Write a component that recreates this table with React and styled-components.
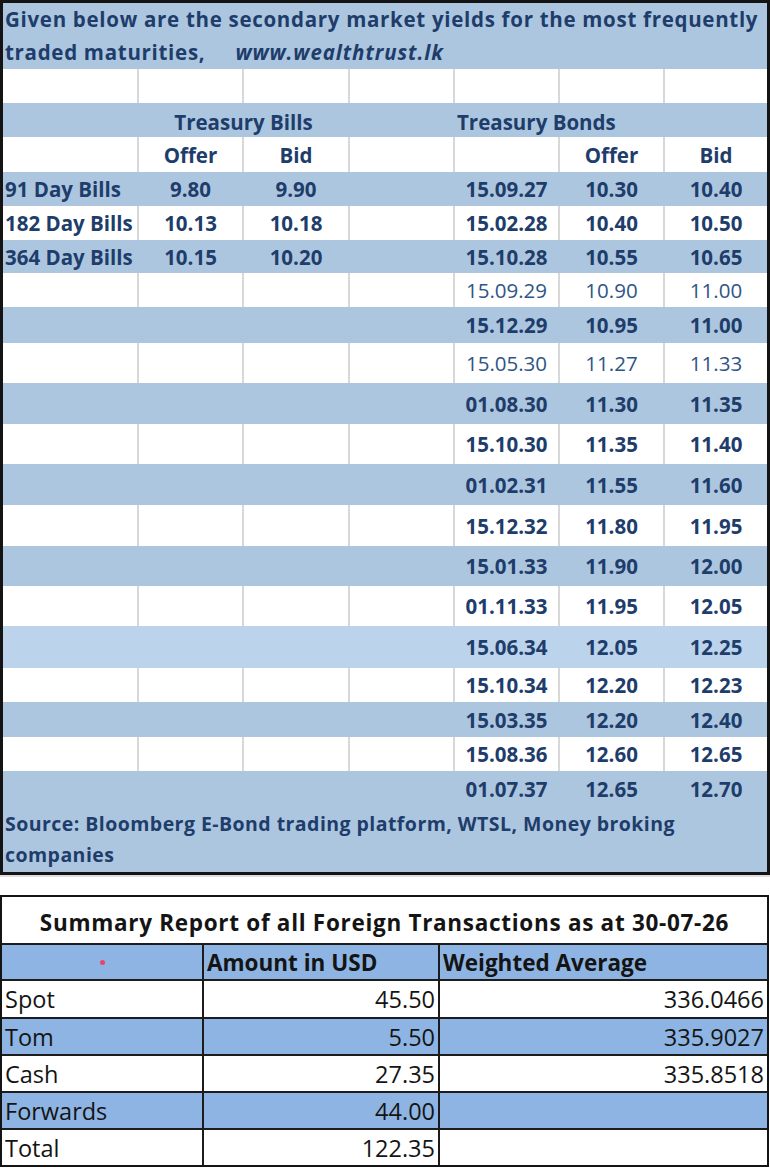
import React from "react";
import styled, { createGlobalStyle } from "styled-components";

const GlobalStyle = createGlobalStyle`
  body {
    margin: 0;
    background: #ffffff;
    font-family: "Open Sans", "Liberation Sans", sans-serif;
  }
  * { box-sizing: border-box; }
`;

const BLUE = "#adc6df";
const LIGHT_BLUE = "#bcd3ec";
const INK = "#1e3d6b";
const SOFT_INK = "#2f5587";

const bills = [
  { label: "91 Day Bills", offer: "9.80", bid: "9.90" },
  { label: "182 Day Bills", offer: "10.13", bid: "10.18" },
  { label: "364 Day Bills", offer: "10.15", bid: "10.20" },
];

// maturity, offer, bid, row height, tone, bold
const bonds = [
  ["15.09.27", "10.30", "10.40", 34, "blue", true],
  ["15.02.28", "10.40", "10.50", 34, "white", true],
  ["15.10.28", "10.55", "10.65", 33, "blue", true],
  ["15.09.29", "10.90", "11.00", 34, "white", false],
  ["15.12.29", "10.95", "11.00", 36, "blue", true],
  ["15.05.30", "11.27", "11.33", 40, "white", false],
  ["01.08.30", "11.30", "11.35", 41, "blue", true],
  ["15.10.30", "11.35", "11.40", 40, "white", true],
  ["01.02.31", "11.55", "11.60", 41, "blue", true],
  ["15.12.32", "11.80", "11.95", 41, "white", true],
  ["15.01.33", "11.90", "12.00", 40, "blue", true],
  ["01.11.33", "11.95", "12.05", 40, "white", true],
  ["15.06.34", "12.05", "12.25", 42, "light", true],
  ["15.10.34", "12.20", "12.23", 34, "white", true],
  ["15.03.35", "12.20", "12.40", 35, "blue", true],
  ["15.08.36", "12.60", "12.65", 34, "white", true],
  ["01.07.37", "12.65", "12.70", 35, "blue", true],
];

const fx = [
  { name: "Spot", amount: "45.50", avg: "336.0466", h: 38 },
  { name: "Tom", amount: "5.50", avg: "335.9027", h: 37, blue: true },
  { name: "Cash", amount: "27.35", avg: "335.8518", h: 37 },
  { name: "Forwards", amount: "44.00", avg: "", h: 37, blue: true },
  { name: "Total", amount: "122.35", avg: "", h: 37 },
];

const toneColor = (tone) =>
  tone === "blue" ? BLUE : tone === "light" ? LIGHT_BLUE : "#ffffff";

export default function App() {
  return (
    <Page>
      <GlobalStyle />
      <YieldPanel>
        <Intro>
          Given below are the secondary market yields for the most frequently
          <br />
          traded maturities,&nbsp;&nbsp;&nbsp;&nbsp; <Site>www.wealthtrust.lk</Site>
        </Intro>

        <Row $h={34} $tone="white">
          {[0, 1, 2, 3, 4, 5, 6].map((i) => (
            <Cell key={i} $grid />
          ))}
        </Row>

        <Row $h={34} $tone="blue" $bold>
          <Cell />
          <Cell $span={2} $lift>Treasury Bills</Cell>
          <Cell />
          <Cell $span={3} $align="left" $lift>Treasury Bonds</Cell>
        </Row>

        <Row $h={35} $tone="white" $bold>
          <Cell $grid />
          <Cell $grid>Offer</Cell>
          <Cell $grid>Bid</Cell>
          <Cell $grid />
          <Cell $grid />
          <Cell $grid>Offer</Cell>
          <Cell $grid>Bid</Cell>
        </Row>

        {bonds.map(([date, offer, bid, h, tone, bold], i) => {
          const bill = bills[i];
          const grid = tone === "white";
          return (
            <Row key={date} $h={h} $tone={tone} $bold={bold}>
              <Cell $grid={grid} $align="left">{bill ? bill.label : ""}</Cell>
              <Cell $grid={grid}>{bill ? bill.offer : ""}</Cell>
              <Cell $grid={grid}>{bill ? bill.bid : ""}</Cell>
              <Cell $grid={grid} />
              <Cell $grid={grid}>{date}</Cell>
              <Cell $grid={grid}>{offer}</Cell>
              <Cell $grid={grid}>{bid}</Cell>
            </Row>
          );
        })}

        <Source>
          Source: Bloomberg E-Bond trading platform, WTSL, Money broking
          <br />
          companies
        </Source>
      </YieldPanel>

      <FxTable>
        <FxTitle>Summary Report of all Foreign Transactions as at 30-07-26</FxTitle>
        <FxRow $h={36} $blue $bold>
          <FxCell $center>
            <Marker />
          </FxCell>
          <FxCell>Amount in USD</FxCell>
          <FxCell>Weighted Average</FxCell>
        </FxRow>
        {fx.map((r) => (
          <FxRow key={r.name} $h={r.h} $blue={r.blue}>
            <FxCell>{r.name}</FxCell>
            <FxCell $right>{r.amount}</FxCell>
            <FxCell $right>{r.avg}</FxCell>
          </FxRow>
        ))}
      </FxTable>
    </Page>
  );
}

const Page = styled.div`
  width: 770px;
`;

const YieldPanel = styled.section`
  border: 3px solid #141414;
  box-shadow: 0 2px 0 #e4dcdc;
  color: ${INK};
`;

const Intro = styled.div`
  background: ${BLUE};
  height: 66px;
  padding: 0 2px;
  font-size: 20.5px;
  font-weight: 700;
  letter-spacing: 0.7px;
  line-height: 33px;
  white-space: nowrap;
`;

const Site = styled.span`
  font-style: italic;
  letter-spacing: 0.9px;
`;

const Row = styled.div`
  display: grid;
  grid-template-columns: 134px 105px 106px 105px 105px 105px 104px;
  height: ${(p) => p.$h}px;
  background: ${(p) => toneColor(p.$tone)};
  font-size: 20.5px;
  font-weight: ${(p) => (p.$bold ? 700 : 400)};
  color: ${(p) => (p.$bold ? INK : SOFT_INK)};
`;

const Cell = styled.div`
  grid-column: span ${(p) => p.$span || 1};
  display: flex;
  align-items: center;
  justify-content: ${(p) => (p.$align === "left" ? "flex-start" : "center")};
  padding-left: ${(p) => (p.$align === "left" ? "2px" : "0")};
  padding-top: ${(p) => (p.$lift ? "4px" : "0")};
  white-space: nowrap;
  &:not(:first-child) {
    border-left: 2px solid ${(p) => (p.$grid ? "#d8d8d8" : "transparent")};
  }
`;

const Source = styled.div`
  background: ${BLUE};
  height: 66px;
  padding: 2px 2px 0;
  font-size: 19.5px;
  font-weight: 700;
  letter-spacing: 0.45px;
  line-height: 31px;
  white-space: nowrap;
`;

const FxTable = styled.section`
  margin-top: 20px;
  width: 769px;
  border: 2px solid #141414;
  color: #141414;
`;

const FxTitle = styled.div`
  height: 46px;
  display: flex;
  align-items: center;
  justify-content: center;
  padding-top: 4px;
  font-size: 22.5px;
  font-weight: 700;
  letter-spacing: 0.7px;
`;

const FxRow = styled.div`
  display: grid;
  grid-template-columns: 200px 236px 1fr;
  height: ${(p) => p.$h}px;
  border-top: 2px solid #1c1c1c;
  background: ${(p) => (p.$blue ? "#8db4e2" : "#ffffff")};
  font-size: ${(p) => (p.$bold ? "22.5px" : "23.5px")};
  font-weight: ${(p) => (p.$bold ? 700 : 400)};
`;

const FxCell = styled.div`
  display: flex;
  align-items: center;
  justify-content: ${(p) =>
    p.$right ? "flex-end" : p.$center ? "center" : "flex-start"};
  padding: 0 3px;
  white-space: nowrap;
  &:not(:first-child) {
    border-left: 2px solid #1c1c1c;
  }
`;

const Marker = styled.span`
  width: 5px;
  height: 5px;
  border-radius: 50%;
  background: #e8456b;
`;
